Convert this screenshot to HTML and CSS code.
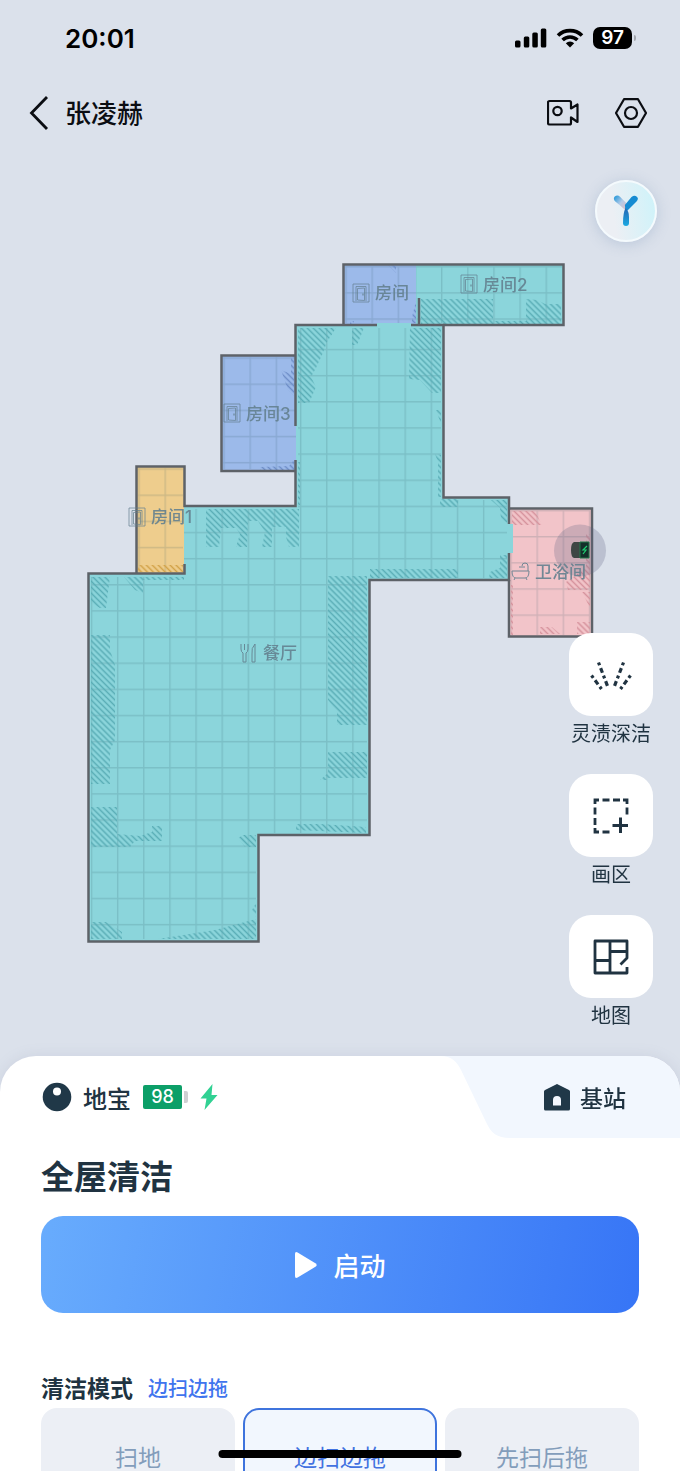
FILE: index.html
```html
<!DOCTYPE html>
<html lang="zh-CN">
<head>
    <meta charset="UTF-8">
    <meta name="viewport" content="width=device-width, initial-scale=1.0">
    <title>张凌赫</title>
    <link rel="stylesheet" href="styles.css">
</head>
<body>
<div class="screen">
    <div class="status-bar">
        <span class="time">20:01</span>
        <div class="status-icons">
            <svg width="32" height="20" viewBox="0 0 32 20">
                <rect x="0" y="12.5" width="5.5" height="7" rx="1.5"/>
                <rect x="8.8" y="8.5" width="5.5" height="11" rx="1.5"/>
                <rect x="17.3" y="4.5" width="5.5" height="15" rx="1.5"/>
                <rect x="25.8" y="0.5" width="5.5" height="19" rx="1.5"/>
            </svg>
            <svg width="28" height="20" viewBox="0 0 28 20">
                <path d="M2 7.6a17 17 0 0 1 24 0M6.600 12a10.500 10.500 0 0 1 14.800 0" fill="none" stroke="#000" stroke-width="3.6"/>
                <path d="M14 19.500l-4.200-4.300a6 6 0 0 1 8.400 0z"/>
            </svg>
            <span class="phone-battery">97</span>
        </div>
    </div>

    <header class="nav-bar">
        <button class="icon-btn" aria-label="返回">
            <svg width="20" height="34" viewBox="0 0 20 34"><path d="M18 1L2.500 17 18 33" fill="none" stroke="#0b0d12" stroke-width="2.8"/></svg>
        </button>
        <h1>张凌赫</h1>
        <button class="icon-btn" aria-label="视频">
            <svg width="32" height="28" viewBox="0 0 32 28" fill="none" stroke="#0b0d12" stroke-width="2.2" stroke-linejoin="round">
                <path d="M24 18.500V24a1.500 1.500 0 0 1-1.500 1.500h-20A1.500 1.500 0 0 1 1 24V3.500A1.500 1.500 0 0 1 2.500 2h20A1.500 1.500 0 0 1 24 3.500v6l6.500-4V23z"/>
                <circle cx="10.5" cy="12" r="4.2"/>
            </svg>
        </button>
        <button class="icon-btn" aria-label="设置">
            <svg width="32" height="30" viewBox="0 0 32 30" fill="none" stroke="#0b0d12" stroke-width="2.2" stroke-linejoin="round">
                <path d="M9 1.200h14L31 15l-8 13.800H9L1 15z"/>
                <circle cx="16" cy="15" r="6"/>
            </svg>
        </button>
    </header>

    <main class="map-area">
        <svg class="map" viewBox="0 150 680 906">
            <defs>
                <pattern id="grid-main" x="12.4" y="348.8" width="26.14" height="26.14" patternUnits="userSpaceOnUse">
                    <path d="M0 .7h26.140M.7 0v26.140" class="grid-line"/>
                </pattern>
                <pattern id="grid-top" x="371.5" y="292.2" width="26.14" height="26.14" patternUnits="userSpaceOnUse">
                    <path d="M0 .7h26.140M.7 0v26.140" class="grid-line"/>
                </pattern>
                <pattern id="grid-room2" x="441" y="292.2" width="26.14" height="26.14" patternUnits="userSpaceOnUse">
                    <path d="M0 .7h26.140M.7 0v26.140" class="grid-line"/>
                </pattern>
                <pattern id="grid-room3" x="249.5" y="383.5" width="26.14" height="26.14" patternUnits="userSpaceOnUse">
                    <path d="M0 .7h26.140M.7 0v26.140" class="grid-line"/>
                </pattern>
                <pattern id="grid-room1" x="164.5" y="494.5" width="26.14" height="26.14" patternUnits="userSpaceOnUse">
                    <path d="M0 .7h26.140M.7 0v26.140" class="grid-line"/>
                </pattern>
                <pattern id="grid-bath" x="536.5" y="536" width="26.14" height="26.14" patternUnits="userSpaceOnUse">
                    <path d="M0 .7h26.140M.7 0v26.140" class="grid-line"/>
                </pattern>
                <pattern id="hatch-teal" width="8" height="4.2" patternUnits="userSpaceOnUse" patternTransform="rotate(45)">
                    <path d="M0 2.100h8" stroke="#5aaeb6" stroke-width="1.5"/>
                </pattern>
                <pattern id="hatch-blue" width="8" height="4.2" patternUnits="userSpaceOnUse" patternTransform="rotate(45)">
                    <path d="M0 2.100h8" stroke="#6f8fc8" stroke-width="1.5"/>
                </pattern>
                <pattern id="hatch-orange" width="8" height="4.2" patternUnits="userSpaceOnUse" patternTransform="rotate(45)">
                    <path d="M0 2.100h8" stroke="#d2a34a" stroke-width="1.5"/>
                </pattern>
                <pattern id="hatch-pink" width="8" height="4.2" patternUnits="userSpaceOnUse" patternTransform="rotate(45)">
                    <path d="M0 2.100h8" stroke="#d6939d" stroke-width="1.5"/>
                </pattern>
                <symbol id="door" viewBox="0 0 18 20">
                    <path d="M1 19V1h16v18zM4 18V3.500h10V18M5.500 5.500l7-.5v12.500l-7-.5z" fill="none" stroke="currentColor" stroke-width=".8"/>
                    <path d="M11 10.500v2" stroke="currentColor" stroke-width="1.2"/>
                </symbol>
            </defs>

            <!-- 房间底色和网格 -->
            <g id="rooms">
                <path id="room1" d="M136 466h49v108h-49z" fill="#eecd8d"/>
                <path d="M138 468h45v104h-45z" fill="url(#grid-room1)"/>
                <path id="room3" d="M221 355h75v116h-75z" fill="#9cbaea"/>
                <path d="M223 357h73v112h-73z" fill="url(#grid-room3)"/>
                <path id="room0" d="M343 264h73v61h-73z" fill="#9cbaea"/>
                <path d="M345 266h71v57h-71z" fill="url(#grid-top)"/>
                <path id="room2" d="M416 264h148v61H416z" fill="#8bd5db"/>
                <path d="M416 266h146v57H416z" fill="url(#grid-room2)"/>
                <path id="bath" d="M509 508h83v129h-83z" fill="#f2c4c9"/>
                <path d="M511 510h79v125h-79z" fill="url(#grid-bath)"/>
                <path id="dining" d="M296 325h81v-2h34v2h33v173h65v26h4v29h-4v27H370v255H259v107H88V574h96v-68h112z" fill="#8bd5db"/>
                <path d="M298 328h143v172h66v78H367v255H256v106H91V577h93v-68h114z" fill="url(#grid-main)"/>
            </g>

            <!-- 已清扫的阴影区域 -->
            <g fill="url(#hatch-teal)">
                <path d="M421 299h72v25h-72zM493 321h33v3h-33zM526 299l11 1 8 4h16v20h-35z"/>
                <path d="M298 328h38l-9 14-5 13-6 13-5 9 5 10-7 16h-11z"/>
                <path d="M352 328h12l-7 17h-5z"/>
                <path d="M410 328h31v65h-9l-12-13-11-1z"/>
                <path d="M436 410h5v14zM435 454l6 1v42h-3v-35zM298 462h2v43h-2z"/>
                <path d="M440 499h18v8h-18zM491 500h16v23l-6-4-1-11zM370 569h88v9h-88zM489 578l1-6 10-4v-13h7v23z"/>
                <path d="M206 509h93v38h-10l-3-10v-10h-14v20h-10l3-15-7-11h-10l-1 26h-11l4-13-4-6h-15l-2 19h-13z"/>
                <path d="M91 577h19l-2 15-2 16h-6l-9-5zM124 577h19v16l-8-3zM143 577h41v3h-41z"/>
                <path d="M91 635h19v15l5 15v75l-5 10v34H91z"/>
                <path d="M328 576h39v149h-30v-13l-9-12zM328 752h39v26h-39zM320 780l8-7v7z"/>
                <path d="M296 824h24l46 3v6l-70-3z"/>
                <path d="M91 807h26v27l23 2 12-4v-6h10v15h-27l-5 6H91z"/>
                <path d="M238 838l5-3h13v12h-11zM91 922h15l16 10v7H91zM158 939l57-9 41-11v20zM252 910l4-7v14z"/>
            </g>
            <g fill="url(#hatch-blue)">
                <path d="M388 265l8 1v7zM412 323v-6l4-16v22zM350 321h4v3h-4z"/>
                <path d="M281 370l10 4v-18h3v40l-6-6zM260 467l29-1 5-6v10h-34z"/>
            </g>
            <path d="M138 565h45v7h-45z" fill="url(#hatch-orange)"/>
            <g fill="url(#hatch-pink)">
                <path d="M512 511h23l7 14h-30zM566 582l20-14v-34h4v56h-22zM582 592h8v16zM540 627h12l8 7h-20zM577 622h13v12h-13zM511 585h2v50h-2z"/>
            </g>

            <!-- 墙体 -->
            <g fill="none" stroke="#5d6268" stroke-width="2.5">
                <path d="M377 325h-81.500v101M295.500 460v46H184.500v-39.500h-48V573.500"/>
                <path d="M184.500 564v9.500H88.500v368h170V835h111V580H509v-27M509 524v-26.500h-65.500V325H411"/>
                <path d="M343.500 325v-60.500h220V325H443M419 298v27"/>
                <path d="M296 355.500h-74.500V471H296"/>
                <path d="M509 508.500h83v128h-83V580"/>
            </g>

            <circle cx="580" cy="550.5" r="26" fill="#5a6080" opacity=".25"/>
            <g class="robot">
                <path d="M589 542h-15q-3 1-3 8t3 8h15z" fill="#3e4644"/>
                <path d="M580 542h9v16h-9z" fill="#14302a" stroke="#23794b" stroke-width="1"/>
                <path d="M587 546l-4 4h3l-3 4" fill="none" stroke="#20cf72" stroke-width="1.2"/>
            </g>

            <g class="room-labels">
                <use href="#door" x="352" y="283" width="18" height="20"/>
                <text x="375" y="299">房间</text>
                <use href="#door" x="460" y="274" width="18" height="20"/>
                <text x="483" y="291">房间2</text>
                <use href="#door" x="223" y="403" width="18" height="20"/>
                <text x="246" y="420">房间3</text>
                <use href="#door" x="128" y="507" width="18" height="20"/>
                <text x="151" y="523">房间1</text>
                <path d="M241 644v5q0 3 2 4v9h3v-9q2-1 2-4v-5M244.500 644v6M255 644q-4 4-3 10v8h3z" class="label-icon"/>
                <text x="263" y="659">餐厅</text>
                <path d="M512 571h17q0 7-4 7h-9q-4 0-4-7zM528 571v-5q0-3-3-3t-3 3M519 567h6M515 578l-1 2M526 578l1 2" class="label-icon"/>
                <text x="535" y="578">卫浴间</text>
            </g>
        </svg>

        <button class="assistant" aria-label="语音助手">
            <svg width="26" height="32" viewBox="0 0 26 32">
                <defs>
                    <linearGradient id="arm" x1="0" y1="0" x2="1" y2="1">
                        <stop offset="0" stop-color="#1593d8"/>
                        <stop offset=".5" stop-color="#b4cbe8"/>
                        <stop offset="1" stop-color="#e8b9bd"/>
                    </linearGradient>
                    <linearGradient id="stem" x1="0" y1="0" x2="0" y2="1">
                        <stop offset="0" stop-color="#2366b4"/>
                        <stop offset="1" stop-color="#1ba9e2"/>
                    </linearGradient>
                </defs>
                <path d="M1.500 1.800q3-2.600 5.500 0l7 7-1 7Q8 11 2 6.200q-2-2.200-.5-4.400z" fill="url(#arm)"/>
                <path d="M18.500 2q3-2.500 5.300-.3t-.3 4.800L12.500 17.500l-.6-7.500z" fill="#168bd2"/>
                <path d="M12.500 13q3.500 3 3.500 9v6q0 3-3 3t-3-3q0-10 2.500-15z" fill="url(#stem)"/>
            </svg>
        </button>

        <div class="tools">
            <button class="tool">
                <span class="tool-tile">
                    <svg width="42" height="42" viewBox="0 0 42 42" fill="none" stroke="#203341" stroke-width="3.2">
                        <path d="M8.500 8.500l9 23.500" stroke-dasharray="3 3 5 3"/>
                        <path d="M33.500 8.500l-9 23.500" stroke-dasharray="3 3 5 3"/>
                        <path d="M1.500 21.500l10 13.500" stroke-dasharray="3 3 5 3"/>
                        <path d="M40.500 21.500l-10 13.500" stroke-dasharray="3 3 5 3"/>
                    </svg>
                </span>
                <span class="tool-name">灵渍深洁</span>
            </button>
            <button class="tool">
                <span class="tool-tile">
                    <svg width="36" height="36" viewBox="0 0 36 36" fill="none" stroke="#203341" stroke-width="2.8">
                        <path d="M2 6V2h4M9.500 2h7M20 2h7M30 2h4v4M34 9.500v7M2 9.500v7M2 20v7M2 30v4h4M9.500 34h7"/>
                        <path d="M27.500 19.500v15.500M19.500 27.500h15.500" stroke-width="3"/>
                    </svg>
                </span>
                <span class="tool-name">画区</span>
            </button>
            <button class="tool">
                <span class="tool-tile">
                    <svg width="36" height="36" viewBox="0 0 36 36" fill="none" stroke="#203341" stroke-width="2.8" stroke-linejoin="round">
                        <path d="M34 28v6H2V2h32v17l-6.500 6.500M17 2v32M17 12.500h17M2 21.500h15"/>
                    </svg>
                </span>
                <span class="tool-name">地图</span>
            </button>
        </div>
    </main>

    <section class="sheet">
        <div class="tabs">
            <button class="tab tab-robot">
                <svg width="30" height="30" viewBox="0 0 30 30">
                    <circle cx="15" cy="15" r="14.3" fill="#203848"/>
                    <circle cx="15" cy="9.5" r="4" fill="#fff"/>
                </svg>
                <span class="tab-name">地宝</span>
                <span class="robot-battery">98</span>
                <svg class="bolt" width="18" height="26" viewBox="0 0 18 26"><path d="M12.500 0L.5 14.500h6L4.500 26l13-15h-6z" fill="#31d193"/></svg>
            </button>
            <button class="tab tab-station">
                <svg class="tab-shape" viewBox="0 0 240 82" preserveAspectRatio="none"><path d="M0 0C12 0 17 6 21 14L46 66C51 77 57 82 70 82H240V0Z" fill="#f2f7fe"/></svg>
                <svg width="28" height="28" viewBox="0 0 28 28">
                    <path d="M14 1l12 6q1 .5 1 1.500V26q0 1.500-1.500 1.500h-23Q1 27.500 1 26V8.500Q1 7.500 2 7zM10 22.500h8v-5.500a4 4 0 0 0-8 0z" fill="#203848" fill-rule="evenodd"/>
                </svg>
                <span class="tab-name">基站</span>
            </button>
        </div>

        <div class="sheet-body">
            <h2>全屋清洁</h2>
            <button class="start-btn">
                <svg width="24" height="28" viewBox="0 0 24 28"><path d="M1 3q0-3 2.600-1.600l17.800 10.800q2.600 1.800 0 3.600L3.600 26.600Q1 28 1 25z" fill="#fff"/></svg>
                启动
            </button>

            <div class="mode-head">
                <h3>清洁模式</h3>
                <span class="mode-current">边扫边拖</span>
            </div>
            <div class="modes">
                <label class="mode"><input type="radio" name="mode">扫地</label>
                <label class="mode"><input type="radio" name="mode" checked>边扫边拖</label>
                <label class="mode"><input type="radio" name="mode">先扫后拖</label>
            </div>
        </div>
    </section>

    <div class="home-indicator"></div>
</div>
</body>
</html>
```
FILE: styles.css
```css
* {
    box-sizing: border-box;
}
body {
    margin: 0;
    font-family: Inter, "Noto Sans CJK SC", sans-serif;
    color: #203341;
}
h1, h2, h3 {
    margin: 0;
}
button {
    padding: 0;
    border: 0;
    background: none;
    font: inherit;
    color: inherit;
    cursor: pointer;
}
svg {
    display: block;
    flex: none;
}
.screen {
    position: relative;
    height: 100vh;
    overflow: hidden;
    background: #dbe1eb;
}

/* 状态栏 */
.status-bar {
    display: flex;
    justify-content: space-between;
    align-items: center;
    height: 76px;
    padding: 0 48px 0 65px;
    color: #000;
}
.time {
    font-size: 26px;
    font-weight: 600;
}
.status-icons {
    display: flex;
    align-items: center;
    gap: 9px;
}
.phone-battery {
    position: relative;
    width: 39px;
    border-radius: 7px;
    background: #000;
    color: #fff;
    font-size: 19px;
    font-weight: 600;
    line-height: 22px;
    text-align: center;
}
.phone-battery::after {
    content: "";
    position: absolute;
    right: -4px;
    top: 8px;
    width: 2px;
    height: 6px;
    border-radius: 0 2px 2px 0;
    background: #a4a8af;
}

/* 导航栏 */
.nav-bar {
    display: flex;
    align-items: center;
    height: 74px;
    padding: 0 33px 0 29px;
}
.nav-bar h1 {
    flex: 1;
    margin-left: 16px;
    padding-bottom: 3px;
    font-size: 26px;
    font-weight: 500;
    color: #0b0d12;
}
.icon-btn + .icon-btn {
    margin-left: 36px;
}

/* 地图 */
.map-area {
    position: relative;
}
.map {
    width: 100%;
    height: auto;
}
.grid-line {
    fill: none;
    stroke: #28505f;
    stroke-opacity: 0.17;
    stroke-width: 1.4;
}
.room-labels {
    color: #64808f;
    fill: #64808f;
    font-size: 17px;
    font-weight: 500;
    opacity: 0.9;
}
.label-icon {
    fill: none;
    stroke: #64808f;
    stroke-width: 1;
}
.assistant {
    position: absolute;
    top: 30px;
    right: 23px;
    display: flex;
    justify-content: center;
    align-items: center;
    width: 62px;
    height: 62px;
    border: 2px solid #f4fafd;
    border-radius: 50%;
    background: linear-gradient(80deg, #eceff4 30%, #cdf3fa);
    box-shadow: 0 2px 14px rgba(110, 140, 180, 0.3);
}
.tools {
    position: absolute;
    right: 27px;
    bottom: 22px;
    display: flex;
    flex-direction: column;
    gap: 22px;
}
.tool {
    display: flex;
    flex-direction: column;
    align-items: center;
    width: 84px;
}
.tool-tile {
    display: flex;
    justify-content: center;
    align-items: center;
    width: 84px;
    height: 83px;
    border-radius: 22px;
    background: #fff;
}
.tool-name {
    font-size: 20px;
    line-height: 36px;
    white-space: nowrap;
}

/* 底部面板 */
.sheet {
    border-radius: 36px 36px 0 0;
    background: #fff;
    overflow: hidden;
    box-shadow: 0 0 14px rgba(120, 130, 160, 0.15);
}
.tabs {
    display: flex;
    justify-content: space-between;
    height: 82px;
}
.tab {
    display: flex;
    align-items: center;
}
.tab-robot {
    padding-left: 42px;
}
.tab-name {
    margin-left: 11px;
    font-size: 24px;
    font-weight: 500;
}
.robot-battery {
    position: relative;
    width: 39px;
    margin-left: 12px;
    border-radius: 2px;
    background: #0c9f68;
    color: #fff;
    font-size: 18px;
    font-weight: 500;
    line-height: 24px;
}
.robot-battery::after {
    content: "";
    position: absolute;
    right: -6px;
    top: 6px;
    width: 4px;
    height: 12px;
    border-radius: 0 2px 2px 0;
    background: #cfcfd2;
}
.bolt {
    margin-left: 18px;
}
.tab-station {
    position: relative;
    width: 240px;
    padding-left: 103px;
}
.tab-station > * {
    position: relative;
}
.tab-station .tab-shape {
    position: absolute;
    top: 0;
    left: 0;
    width: 100%;
    height: 100%;
}
.tab-station .tab-name {
    margin-left: 9px;
    font-size: 23px;
}
.sheet-body {
    padding: 0 41px;
}
.sheet-body h2 {
    margin: 15px 0;
    font-size: 33px;
    font-weight: 700;
    line-height: 48px;
}
.start-btn {
    display: flex;
    justify-content: center;
    align-items: center;
    gap: 15px;
    width: 100%;
    height: 97px;
    border-radius: 22px;
    background: linear-gradient(100deg, #68acfd, #3775f6);
    color: #fff;
    font-size: 26px;
    font-weight: 500;
}
.mode-head {
    display: flex;
    align-items: center;
    gap: 15px;
    margin: 60px 0 3px;
    line-height: 32px;
}
.mode-head h3 {
    font-size: 23px;
    font-weight: 700;
}
.mode-current {
    font-size: 20px;
    font-weight: 500;
    color: #3f74ee;
}
.modes {
    display: flex;
    gap: 8px;
}
.mode {
    flex: 1;
    border: 2px solid transparent;
    border-radius: 16px;
    background: #eceff5;
    color: #839dbb;
    font-size: 23px;
    line-height: 96px;
    text-align: center;
    cursor: pointer;
}
.mode input {
    position: absolute;
    opacity: 0;
    pointer-events: none;
}
.mode:has(input:checked) {
    border-color: #3f74dd;
    background: #f2f7fe;
    color: #4272e0;
}
.home-indicator {
    position: absolute;
    bottom: 13px;
    left: 50%;
    width: 243px;
    height: 8px;
    border-radius: 4px;
    background: #000;
    transform: translateX(-50%);
}
```
